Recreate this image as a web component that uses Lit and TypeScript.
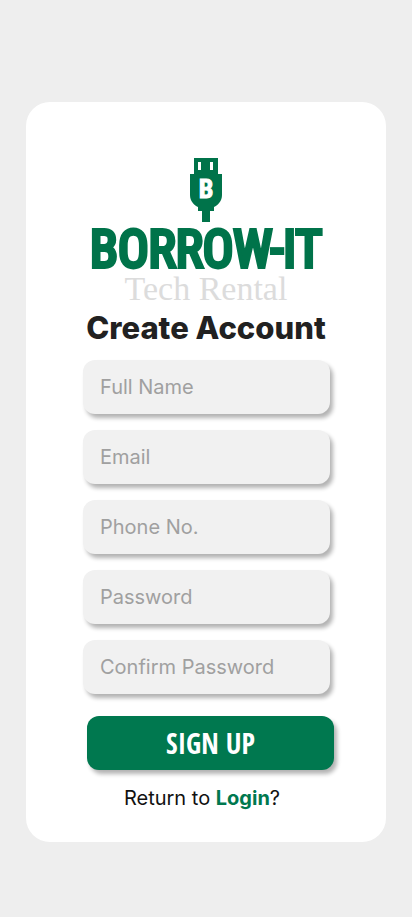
import { LitElement, html, css } from "lit";
import { customElement } from "lit/decorators.js";

interface Field {
  name: string;
  label: string;
  type: string;
}

const FIELDS: Field[] = [
  { name: "name", label: "Full Name", type: "text" },
  { name: "email", label: "Email", type: "email" },
  { name: "phone", label: "Phone No.", type: "tel" },
  { name: "password", label: "Password", type: "password" },
  { name: "confirm", label: "Confirm Password", type: "password" },
];

@customElement("brand-logo")
class BrandLogo extends LitElement {
  static styles = css`
    :host {
      display: flex;
      flex-direction: column;
      align-items: center;
      white-space: nowrap;
    }
    .plug {
      display: block;
      width: 32px;
      height: 64px;
      fill: #00734a;
    }
    .letter {
      fill: #fff;
      stroke: #fff;
      stroke-width: 1px;
      font: 700 26px "Roboto Condensed", "Liberation Sans Narrow", "Liberation Sans", sans-serif;
      text-anchor: middle;
    }
    .name {
      margin-top: 4px;
      color: #00734a;
      -webkit-text-stroke: 4px #00734a;
      font: 400 51px/48px "Roboto Condensed", "Liberation Sans Narrow", "Liberation Sans", sans-serif;
    }
    .tagline {
      color: #dcdcdc;
      font: 400 34px/30px "Liberation Serif", serif;
    }
  `;

  render() {
    return html`
      <svg class="plug" viewBox="0 0 32 64" aria-hidden="true">
        <path
          fill-rule="evenodd"
          d="M4 0H28V16H32V37C32 43 28 47 24 49V53H20V64H12V53H8V49C4 47 0 43 0 37V16H4ZM8 4V12H11V4ZM20 4V12H23V4Z"
        />
        <text class="letter" x="16" y="40">B</text>
      </svg>
      <div class="name">BORROW-IT</div>
      <div class="tagline">Tech Rental</div>
    `;
  }
}

@customElement("app-root")
class AppRoot extends LitElement {
  static styles = css`
    :host {
      display: block;
      box-sizing: border-box;
      min-height: 100vh;
      padding: 102px 26px 75px;
      background: #eeeeee;
      font-family: Inter, sans-serif;
    }
    .card {
      box-sizing: border-box;
      max-width: 480px;
      margin: 0 auto;
      padding: 56px 52px 32px;
      border-radius: 24px;
      background: #fff;
    }
    h1 {
      margin: 6px 0 14px;
      color: #212121;
      font: 800 31px/36px Inter, sans-serif;
      text-align: center;
      white-space: nowrap;
    }
    .fields {
      display: flex;
      flex-direction: column;
      gap: 16px;
      padding: 0 4px 0 5px;
    }
    input,
    button {
      box-sizing: border-box;
      height: 54px;
      border: 0;
      border-radius: 12px;
      box-shadow: 3px 4px 4px rgba(0, 0, 0, 0.3);
    }
    input {
      width: 100%;
      padding: 0 17px;
      background: #f1f1f1;
      color: #212121;
      font: 400 20px/24px Inter, sans-serif;
    }
    input::placeholder {
      color: #a0a0a0;
      opacity: 1;
    }
    .actions {
      display: flex;
      padding: 22px 0 16px 9px;
    }
    button {
      flex: 1;
      padding: 0;
      background: #00784f;
      color: #fff;
      font: 700 28px/36px "Open Sans Condensed", "Roboto Condensed", "Liberation Sans Narrow", "Liberation Sans", sans-serif;
    }
    .return {
      margin: 0;
      padding-right: 8px;
      color: #111;
      font-size: 20px;
      line-height: 24px;
      text-align: center;
    }
    a {
      color: #00784f;
      font-weight: 700;
      text-decoration: none;
    }
  `;

  render() {
    return html`
      <main class="card">
        <brand-logo></brand-logo>
        <h1>Create Account</h1>
        <form>
          <div class="fields">
            ${FIELDS.map(
              (f) => html`<input
                name=${f.name}
                type=${f.type}
                placeholder=${f.label}
                aria-label=${f.label}
              />`
            )}
          </div>
          <div class="actions"><button type="submit">SIGN UP</button></div>
        </form>
        <p class="return">Return to <a href="#login">Login</a>?</p>
      </main>
    `;
  }
}
